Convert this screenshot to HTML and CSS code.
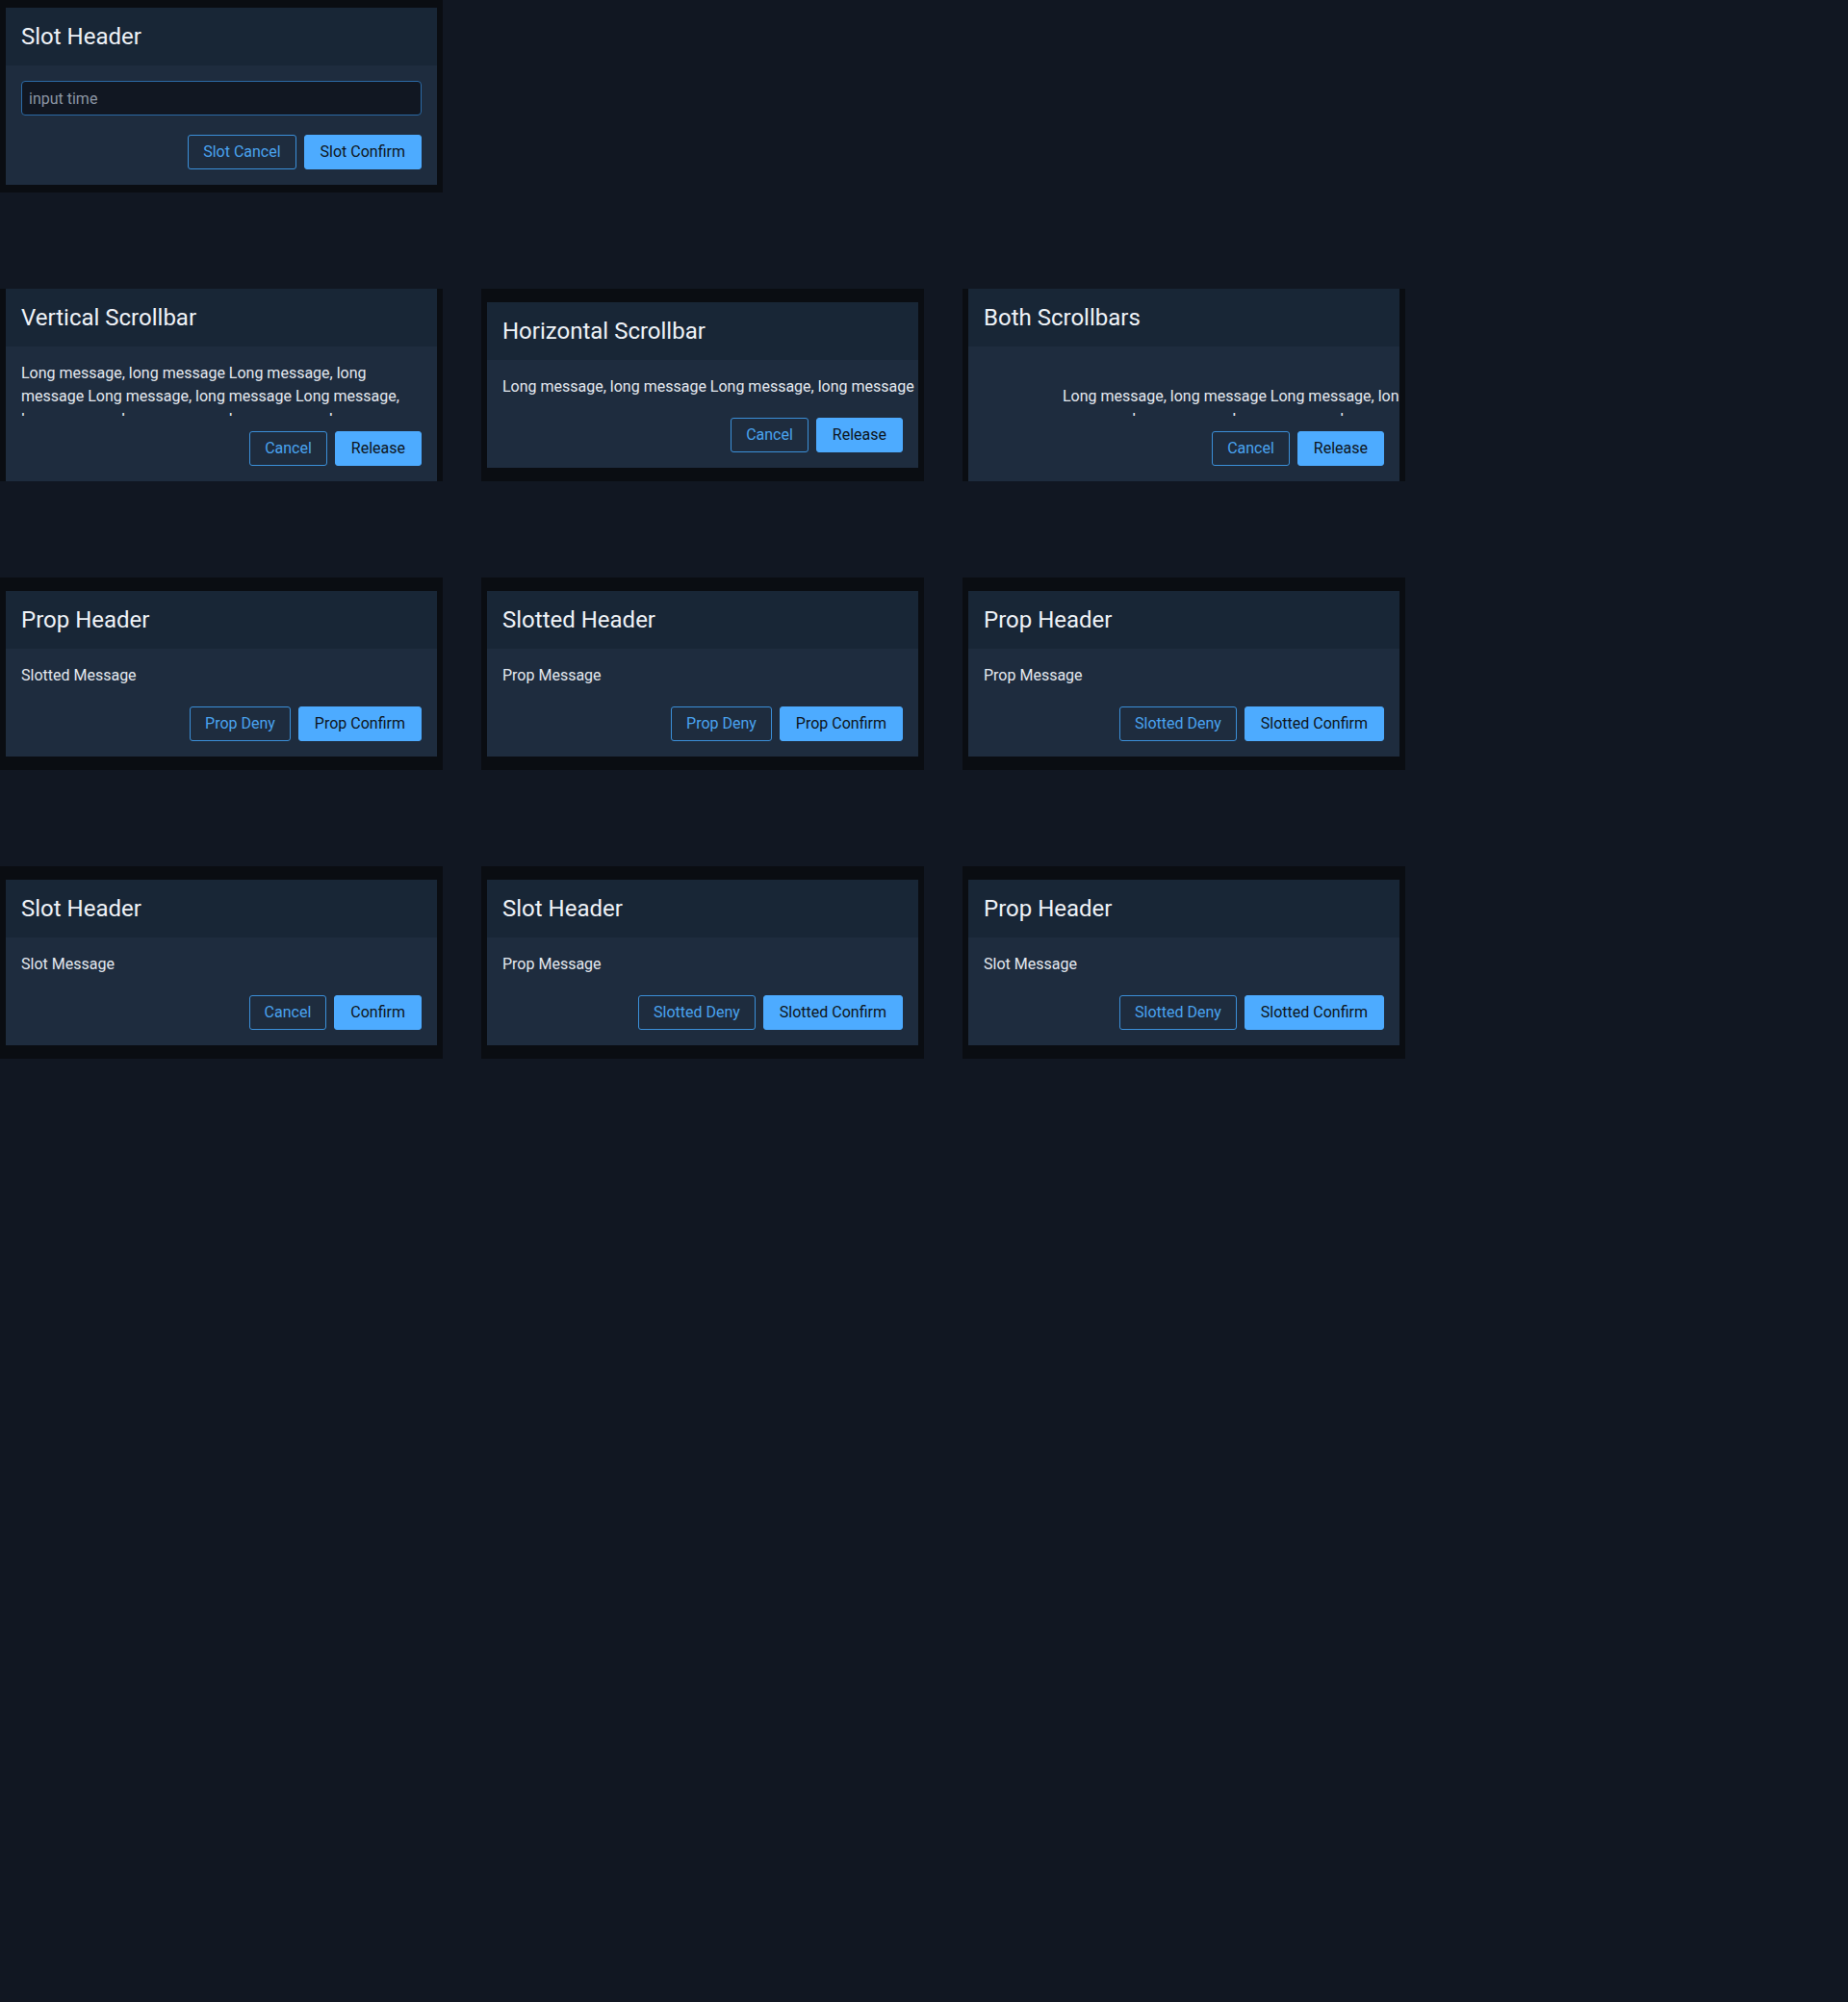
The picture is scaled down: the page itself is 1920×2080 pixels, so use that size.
FILE: index.html
```html
<!DOCTYPE html>
<html lang="en">
<head>
<meta charset="utf-8">
<title>Dialogs</title>
<link rel="stylesheet" href="styles.css">
</head>
<body>
<div class="page">
  <div class="row">
    <div class="frame">
      <div class="dialog">
        <div class="dlg-header">Slot Header</div>
        <div class="dlg-body">
          <div class="dlg-msg"><input class="field" type="text" placeholder="input time"></div>
          <div class="dlg-actions">
            <button class="btn btn-outline">Slot Cancel</button>
            <button class="btn btn-solid">Slot Confirm</button>
          </div>
        </div>
      </div>
    </div>
  </div>

  <div class="row">
    <div class="frame">
      <div class="dialog">
        <div class="dlg-header">Vertical Scrollbar</div>
        <div class="dlg-body">
          <div class="dlg-msg">Long message, long message Long message, long message Long message, long message Long message, long message Long message, long message Long message, long message Long message, long message Long message, long message Long message, long message Long message, long message</div>
          <div class="dlg-actions">
            <button class="btn btn-outline">Cancel</button>
            <button class="btn btn-solid">Release</button>
          </div>
        </div>
      </div>
    </div>
    <div class="frame">
      <div class="dialog">
        <div class="dlg-header">Horizontal Scrollbar</div>
        <div class="dlg-body">
          <div class="dlg-msg bleed nowrap">Long message, long message Long message, long message Long message, long message Long message, long message</div>
          <div class="dlg-actions">
            <button class="btn btn-outline">Cancel</button>
            <button class="btn btn-solid">Release</button>
          </div>
        </div>
      </div>
    </div>
    <div class="frame">
      <div class="dialog">
        <div class="dlg-header">Both Scrollbars</div>
        <div class="dlg-body">
          <div class="dlg-msg bleed"><div class="wide-text">Long message, long message Long message, long message Long message, long message Long message, long message Long message, long message Long message, long message Long message, long message Long message, long message Long message, long message Long message, long message</div></div>
          <div class="dlg-actions">
            <button class="btn btn-outline">Cancel</button>
            <button class="btn btn-solid">Release</button>
          </div>
        </div>
      </div>
    </div>
  </div>

  <div class="row">
    <div class="frame">
      <div class="dialog">
        <div class="dlg-header">Prop Header</div>
        <div class="dlg-body">
          <div class="dlg-msg">Slotted Message</div>
          <div class="dlg-actions">
            <button class="btn btn-outline">Prop Deny</button>
            <button class="btn btn-solid">Prop Confirm</button>
          </div>
        </div>
      </div>
    </div>
    <div class="frame">
      <div class="dialog">
        <div class="dlg-header">Slotted Header</div>
        <div class="dlg-body">
          <div class="dlg-msg">Prop Message</div>
          <div class="dlg-actions">
            <button class="btn btn-outline">Prop Deny</button>
            <button class="btn btn-solid">Prop Confirm</button>
          </div>
        </div>
      </div>
    </div>
    <div class="frame">
      <div class="dialog">
        <div class="dlg-header">Prop Header</div>
        <div class="dlg-body">
          <div class="dlg-msg">Prop Message</div>
          <div class="dlg-actions">
            <button class="btn btn-outline">Slotted Deny</button>
            <button class="btn btn-solid">Slotted Confirm</button>
          </div>
        </div>
      </div>
    </div>
  </div>

  <div class="row">
    <div class="frame">
      <div class="dialog">
        <div class="dlg-header">Slot Header</div>
        <div class="dlg-body">
          <div class="dlg-msg">Slot Message</div>
          <div class="dlg-actions">
            <button class="btn btn-outline">Cancel</button>
            <button class="btn btn-solid">Confirm</button>
          </div>
        </div>
      </div>
    </div>
    <div class="frame">
      <div class="dialog">
        <div class="dlg-header">Slot Header</div>
        <div class="dlg-body">
          <div class="dlg-msg">Prop Message</div>
          <div class="dlg-actions">
            <button class="btn btn-outline">Slotted Deny</button>
            <button class="btn btn-solid">Slotted Confirm</button>
          </div>
        </div>
      </div>
    </div>
    <div class="frame">
      <div class="dialog">
        <div class="dlg-header">Prop Header</div>
        <div class="dlg-body">
          <div class="dlg-msg">Slot Message</div>
          <div class="dlg-actions">
            <button class="btn btn-outline">Slotted Deny</button>
            <button class="btn btn-solid">Slotted Confirm</button>
          </div>
        </div>
      </div>
    </div>
  </div>
</div>
</body>
</html>
```

FILE: styles.css
```css
html, body {
  margin: 0;
  padding: 0;
  background: #111722;
}

body {
  font-family: Roboto, "Noto Sans", sans-serif;
  color: #e3e8ef;
  min-height: 2080px;
}

.page {
  display: flex;
  flex-direction: column;
  gap: 100px;
}

.row {
  display: flex;
  gap: 40px;
}

.frame {
  width: 460px;
  height: 200px;
  box-sizing: border-box;
  padding: 0 6px;
  background: #0a0d12;
  display: flex;
  align-items: center;
}

.dialog {
  width: 100%;
  max-height: 100%;
  display: flex;
  flex-direction: column;
  overflow: hidden;
  background: #1e2c3e;
}

.dlg-header {
  flex-shrink: 0;
  padding: 16px;
  font-size: 24px;
  line-height: 28px;
  color: #eef2f7;
  background: #182636;
}

.dlg-body {
  flex: 1 1 auto;
  min-height: 0;
  display: flex;
  flex-direction: column;
  padding: 16px;
}

.dlg-msg {
  flex: 0 1 auto;
  min-height: 0;
  overflow: hidden;
  padding-bottom: 4px;
  margin-bottom: 16px;
  font-size: 16px;
  line-height: 24px;
  color: #e3e8ef;
}

.bleed {
  margin-right: -16px;
}

.nowrap {
  white-space: nowrap;
}

.wide-text {
  width: 700px;
  padding: 24px 0 0 82px;
}

.field {
  display: block;
  width: 100%;
  height: 36px;
  box-sizing: border-box;
  margin: 0;
  padding: 0 7px;
  border: 1px solid #2c6aa5;
  border-radius: 4px;
  background: #111722;
  color: #e3e8ef;
  font-family: Roboto, "Noto Sans", sans-serif;
  font-size: 16px;
  outline: none;
}

.field::placeholder {
  color: #8b95a4;
}

.dlg-actions {
  flex-shrink: 0;
  display: flex;
  justify-content: flex-end;
  gap: 8px;
}

.btn {
  height: 36px;
  margin: 0;
  box-sizing: border-box;
  border-radius: 3px;
  font-family: Roboto, "Noto Sans", sans-serif;
  font-size: 16px;
  line-height: 20px;
  cursor: pointer;
}

.btn-outline {
  padding: 0 15px;
  background: transparent;
  border: 1px solid #3b8fd8;
  color: #4aa3ef;
}

.btn-solid {
  padding: 0 16px;
  background: #4dabff;
  border: 1px solid #4dabff;
  color: #0d1520;
}
```
